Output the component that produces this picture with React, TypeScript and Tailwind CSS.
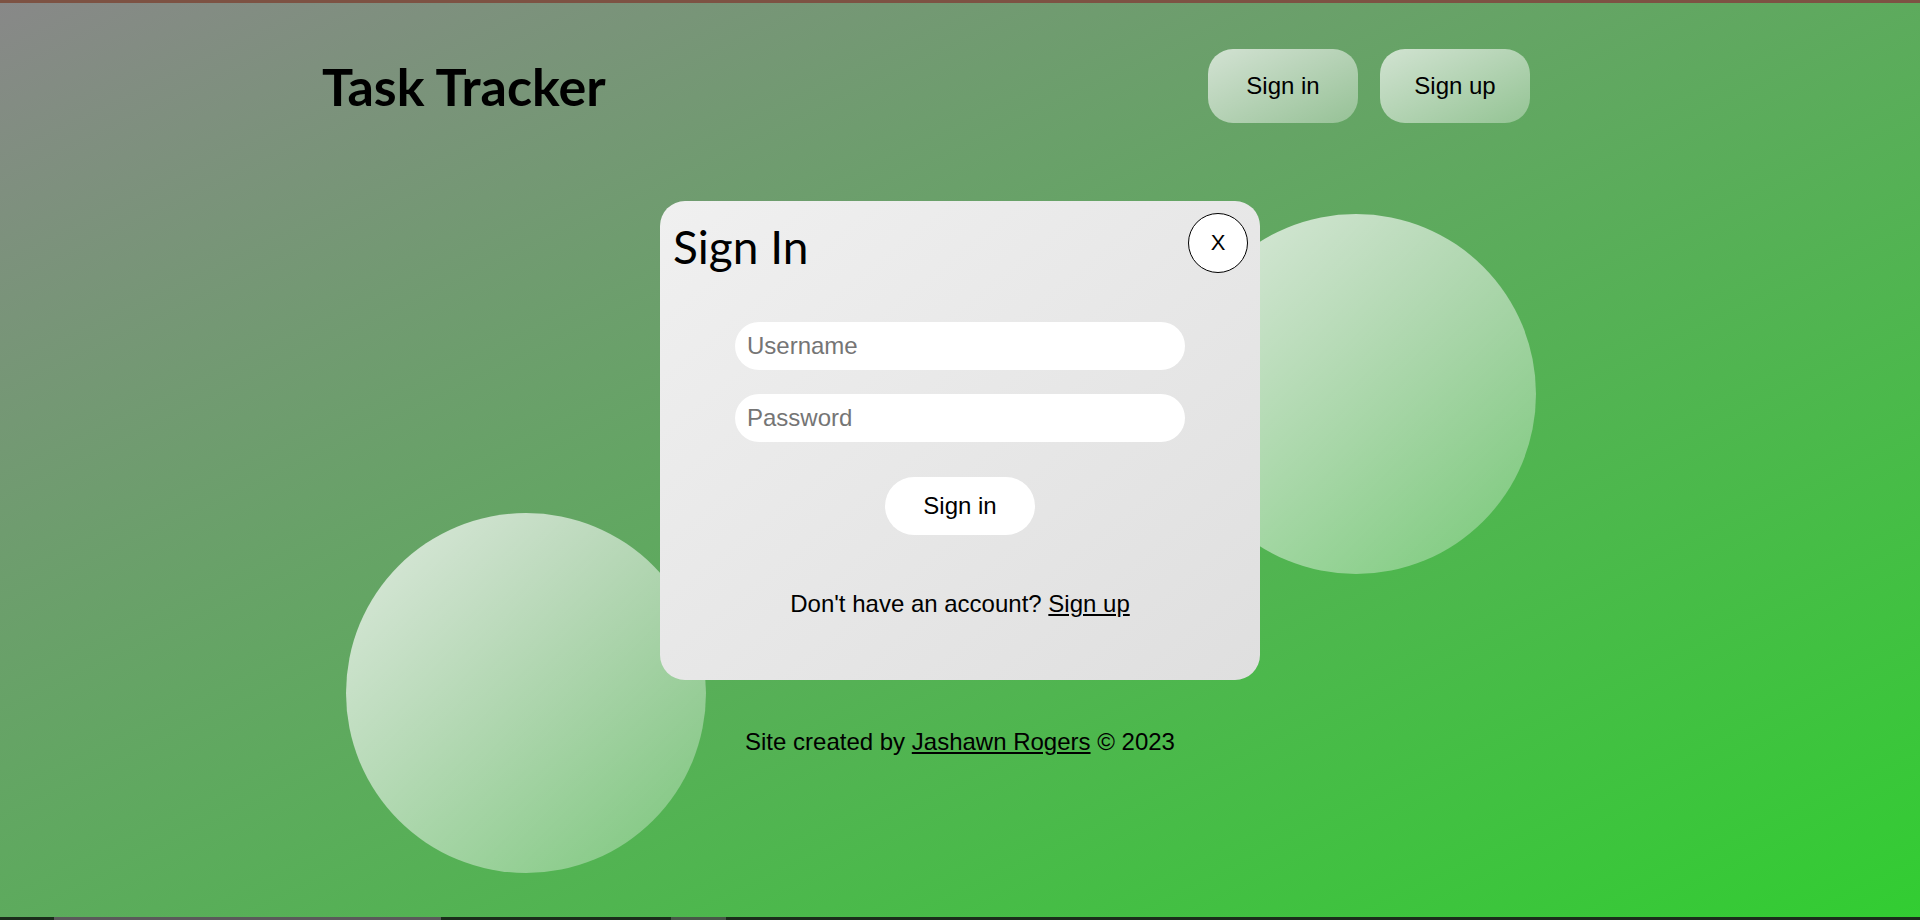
import React from "react";

const sans = "font-['Liberation_Sans',Arial,sans-serif]";
const display = "font-['Lato','Open_Sans',sans-serif]";

// decorative glass circles behind the modal
const Bubble = ({ className }: { className: string }) => (
  <div
    className={`absolute w-[360px] h-[360px] rounded-full bg-[linear-gradient(to_bottom_right,rgba(255,255,255,0.78),rgba(255,255,255,0.24))] ${className}`}
  />
);

const NavButton = ({ label }: { label: string }) => (
  <button
    className={`w-[150px] h-[74px] rounded-[25px] bg-[linear-gradient(to_bottom_right,rgba(255,255,255,0.7),rgba(255,255,255,0.32))] text-black text-2xl ${sans}`}
  >
    {label}
  </button>
);

const App = () => {
  return (
    <div className="w-full h-[920px] flex flex-col overflow-hidden">
      <div className="h-[3px] bg-[#7d5243]" />

      <div className="relative flex-1 flex flex-col bg-[linear-gradient(to_bottom_right,#888888,#32cd32)]">
        <Bubble className="left-[346px] top-[510px]" />
        <Bubble className="left-[1176px] top-[211px]" />

        {/* Header */}
        <header className="relative w-[1280px] mx-auto flex items-center justify-between pt-[46px] pl-[2px] pr-[70px]">
          <h1 className={`text-[52px] font-bold text-black leading-none ${display}`}>Task Tracker</h1>
          <nav className="flex gap-[22px]">
            <NavButton label="Sign in" />
            <NavButton label="Sign up" />
          </nav>
        </header>

        {/* Sign in modal */}
        <section className="relative mt-[78px] mx-auto w-[600px] h-[479px] rounded-[25px] bg-[linear-gradient(to_bottom_right,#f0f0f0,#dfdfdf)] p-3 flex flex-col">
          <div className="h-[60px] flex items-start justify-between">
            <h2 className={`pt-[6px] pl-[1px] text-[46px] font-normal leading-[1.2] text-black ${display}`}>Sign In</h2>
            <button className={`w-[60px] h-[60px] pb-[2px] rounded-full bg-white border border-black text-[22px] text-black ${sans}`}>
              X
            </button>
          </div>

          <form className="flex flex-col items-center mt-[49px]" onSubmit={(e) => e.preventDefault()}>
            <input
              type="text"
              placeholder="Username"
              className={`w-[450px] h-[48px] rounded-full bg-white px-3 text-2xl outline-none placeholder:text-[#757575] ${sans}`}
            />
            <input
              type="password"
              placeholder="Password"
              className={`mt-6 w-[450px] h-[48px] rounded-full bg-white px-3 text-2xl outline-none placeholder:text-[#757575] ${sans}`}
            />
            <button className={`mt-[35px] w-[150px] h-[58px] rounded-full bg-white text-2xl text-black ${sans}`}>
              Sign in
            </button>
          </form>

          <p className={`mt-[53px] text-center text-2xl text-black ${sans}`}>
            Don't have an account? <a className="underline">Sign up</a>
          </p>
        </section>

        <footer className={`relative mt-[46px] text-center text-2xl text-black ${sans}`}>
          Site created by <a className="underline">Jashawn Rogers</a> © 2023
        </footer>
      </div>

      <div className="h-[3px] flex bg-[#1b2d1b]">
        <div className="w-[54px]" />
        <div className="w-[387px] bg-[#5a5a5a]" />
        <div className="w-[230px]" />
        <div className="w-[55px] bg-[#475847]" />
      </div>
    </div>
  );
};

export default App;
